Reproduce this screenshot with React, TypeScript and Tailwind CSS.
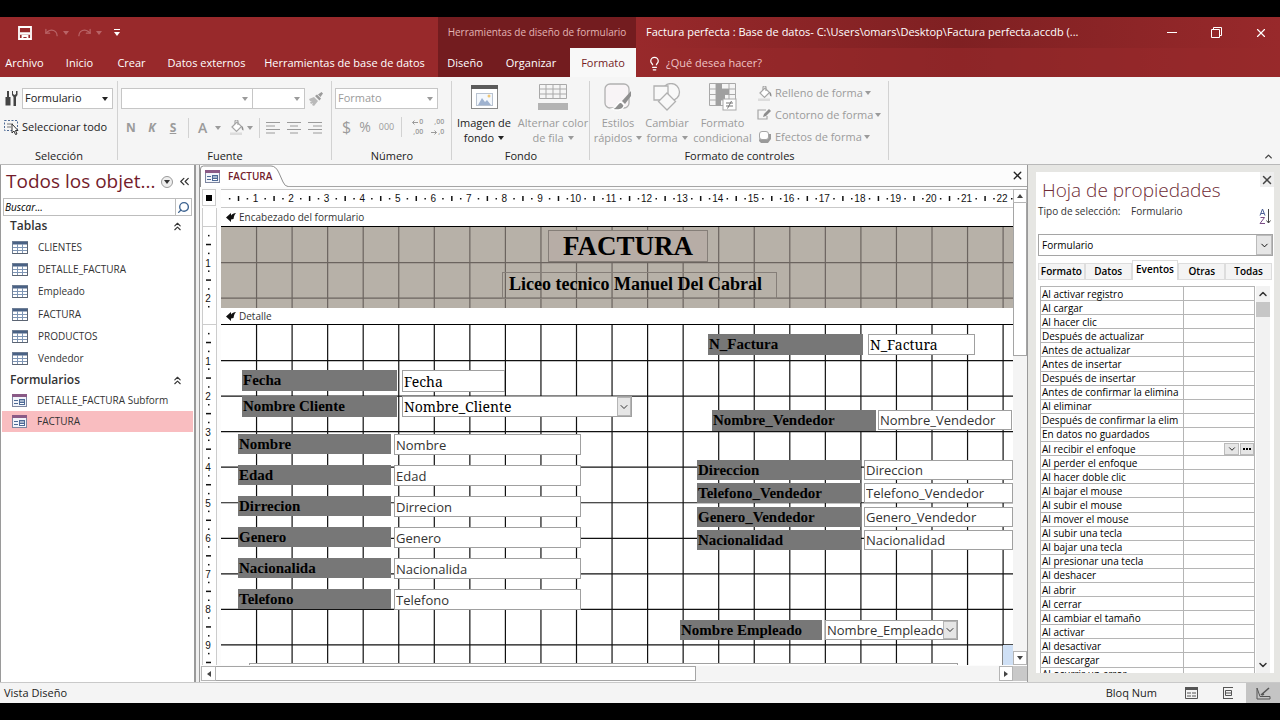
import type { ReactNode } from "react";
import clsx from "clsx";
import {
  ChevronDown,
  ChevronsLeft,
  ChevronsUp,
  ChevronUp,
  Lightbulb,
  Redo,
  Search,
  Undo,
  X,
} from "lucide-react";

const CM = 35.55; // one ruler centimetre on screen

const tables = ["CLIENTES", "DETALLE_FACTURA", "Empleado", "FACTURA", "PRODUCTOS", "Vendedor"];
const forms = ["DETALLE_FACTURA Subform", "FACTURA"];

const menuTabs = [
  { name: "Archivo", width: "w-[49px]" },
  { name: "Inicio", width: "w-[61px]" },
  { name: "Crear", width: "w-[43px]" },
  { name: "Datos externos", width: "w-[107px]" },
  { name: "Herramientas de base de datos", width: "w-[169px]" },
];

const events = [
  "Al activar registro",
  "Al cargar",
  "Al hacer clic",
  "Después de actualizar",
  "Antes de actualizar",
  "Antes de insertar",
  "Después de insertar",
  "Antes de confirmar la elimina",
  "Al eliminar",
  "Después de confirmar la elim",
  "En datos no guardados",
  "Al recibir el enfoque",
  "Al perder el enfoque",
  "Al hacer doble clic",
  "Al bajar el mouse",
  "Al subir el mouse",
  "Al mover el mouse",
  "Al subir una tecla",
  "Al bajar una tecla",
  "Al presionar una tecla",
  "Al deshacer",
  "Al abrir",
  "Al cerrar",
  "Al cambiar el tamaño",
  "Al activar",
  "Al desactivar",
  "Al descargar",
  "Al ocurrir un error",
];

// Controls placed on the detail section: box is [left, top, width, height]
type Field = {
  id: string;
  label: string;
  value: string;
  labelBox: number[];
  box: number[];
  serif?: boolean;
  combo?: boolean;
};

const fields: Field[] = [
  { id: "fecha", label: "Fecha", value: "Fecha", labelBox: [21, 45, 155, 21], box: [181, 45, 103, 22], serif: true },
  { id: "cliente", label: "Nombre Cliente", value: "Nombre_Cliente", labelBox: [21, 71, 155, 21], box: [181, 71, 230, 21], serif: true, combo: true },
  { id: "nombre", label: "Nombre", value: "Nombre", labelBox: [17, 109, 153, 20], box: [173, 109, 187, 21] },
  { id: "edad", label: "Edad", value: "Edad", labelBox: [17, 140, 153, 20], box: [173, 140, 187, 21] },
  { id: "dirrecion", label: "Dirrecion", value: "Dirrecion", labelBox: [17, 171, 153, 20], box: [173, 171, 187, 21] },
  { id: "genero", label: "Genero", value: "Genero", labelBox: [17, 202, 153, 20], box: [173, 202, 187, 21] },
  { id: "nacionalida", label: "Nacionalida", value: "Nacionalida", labelBox: [17, 233, 153, 20], box: [173, 233, 187, 21] },
  { id: "telefono", label: "Telefono", value: "Telefono", labelBox: [17, 264, 153, 20], box: [173, 264, 187, 21] },
  { id: "nfactura", label: "N_Factura", value: "N_Factura", labelBox: [487, 9, 155, 21], box: [647, 9, 107, 21], serif: true },
  { id: "nvendedor", label: "Nombre_Vendedor", value: "Nombre_Vendedor", labelBox: [491, 85, 164, 21], box: [657, 85, 134, 20] },
  { id: "direccion", label: "Direccion", value: "Direccion", labelBox: [476, 135, 164, 20], box: [643, 135, 149, 20] },
  { id: "tvendedor", label: "Telefono_Vendedor", value: "Telefono_Vendedor", labelBox: [476, 158, 164, 20], box: [643, 158, 149, 20] },
  { id: "gvendedor", label: "Genero_Vendedor", value: "Genero_Vendedor", labelBox: [476, 182, 164, 20], box: [643, 182, 149, 20] },
  { id: "nacionalidad", label: "Nacionalidad", value: "Nacionalidad", labelBox: [476, 205, 164, 20], box: [643, 205, 149, 20] },
  { id: "empleado", label: "Nombre Empleado", value: "Nombre_Empleado", labelBox: [459, 295, 142, 20], box: [604, 295, 133, 20], combo: true },
];

const place = ([left, top, width, height]: number[]) => ({ left, top, width, height });

/* ---------- small glyphs ---------- */

function Caret({ className = "" }: { className?: string }) {
  return (
    <svg viewBox="0 0 6 4" className={clsx("h-1 w-[6px] shrink-0 fill-current", className)}>
      <path d="M0 0h6L3 4z" />
    </svg>
  );
}

function TableIcon() {
  return (
    <svg viewBox="0 0 16 13" className="h-[13px] w-4 shrink-0">
      <rect x="0.5" y="0.5" width="15" height="12" fill="#fff" stroke="#6f7f96" />
      <rect x="1" y="1" width="14" height="2.500" fill="#4a6285" />
      <path d="M1 6.500h14M1 9.500h14M5.500 3v9M10.500 3v9" stroke="#7f96b5" />
      <path d="M0.500 12.500h15V1" stroke="#5b6472" fill="none" />
    </svg>
  );
}

function FormIcon() {
  return (
    <svg viewBox="0 0 15 13" className="h-[13px] w-[15px] shrink-0">
      <rect x="0.5" y="0.5" width="14" height="12" fill="#f2f4fa" stroke="#7d86a0" />
      <rect x="0" y="0" width="15" height="3" fill="#8a5a86" />
      <path d="M2 6.500h4M2 9.500h4" stroke="#4d6a96" />
      <rect x="7" y="5" width="6" height="6" fill="#4d6a96" />
      <path d="M8 7h4M8 9.500h4" stroke="#fff" />
    </svg>
  );
}

function BucketIcon() {
  return (
    <svg viewBox="0 0 16 15" className="h-[15px] w-4 shrink-0" fill="none" stroke="#a6a6a6" strokeWidth="1.200">
      <path d="M3 7l5-5 4.500 4.500-5 5z" fill="#fff" />
      <path d="M6 4V1.500a1.500 1.500 0 013 0V5" />
      <path d="M12 6c2 0 2.500 2 2.500 4.500-1 0-2-1-2-4z" fill="#8c8c8c" stroke="none" />
      <rect x="1" y="12.500" width="12" height="2.500" fill="#dcdcdc" stroke="none" />
    </svg>
  );
}

function AlignIcon({ d }: { d: string }) {
  return (
    <svg viewBox="0 0 14 12" className="h-3 w-[14px]" stroke="#9b9b9b">
      <path d={d} />
    </svg>
  );
}

function DecimalIcon({ top, bottom, arrow }: { top: string; bottom: string; arrow: "left" | "right" }) {
  const arrowPath = arrow === "left" ? "M6 2.500H.5M2.500.5l-2 2 2 2" : "M0 2.500h5.500M3.500.5l2 2-2 2";
  const icon = (
    <svg viewBox="0 0 6 5" className="h-[5px] w-[6px]" fill="none" stroke="currentColor">
      <path d={arrowPath} />
    </svg>
  );
  return (
    <span className="flex w-[15px] flex-col items-end text-[7px] leading-[10px] font-semibold">
      <span className="flex items-center gap-px">
        {arrow === "left" && icon}
        {top}
      </span>
      <span className="flex items-center gap-px">
        {arrow === "right" && icon}
        {bottom}
      </span>
    </span>
  );
}

/* ---------- title bar and ribbon tabs ---------- */

function Header() {
  return (
    <header className="flex h-[60px] shrink-0 bg-[#98292b] text-[11px] font-medium text-white">
      <div className="flex w-[438px] shrink-0 flex-col">
        <div className="flex h-[31px] items-center pl-[18px]">
          <button aria-label="Guardar">
            <svg viewBox="0 0 14 14" className="h-[14px] w-[14px]" fill="none" stroke="#fff" strokeWidth="1.800">
              <path d="M1 1h12v12H1z" />
              <path d="M2 7.500h10" strokeWidth="2.500" />
              <path d="M4.500 13v-3h5v3" />
            </svg>
          </button>
          <button aria-label="Deshacer" className="ml-3 flex items-center gap-1 text-[#b96467]">
            <Undo size={15} />
            <Caret />
          </button>
          <button aria-label="Rehacer" className="ml-2 flex items-center gap-1 text-[#b96467]">
            <Redo size={15} />
            <Caret />
          </button>
          <button aria-label="Personalizar" className="ml-3 flex flex-col items-center gap-[2px]">
            <span className="h-px w-[6px] bg-white" />
            <Caret />
          </button>
        </div>
        <nav className="flex flex-1 items-center pt-px">
          {menuTabs.map((tab) => (
            <button key={tab.name} className={clsx("shrink-0 text-center whitespace-nowrap", tab.width)}>
              {tab.name}
            </button>
          ))}
        </nav>
      </div>

      <div className="flex w-[198px] shrink-0 flex-col bg-[#731c1f]">
        <div className="flex h-[31px] items-center justify-center text-[10px] text-[#e3b4b5]">
          <span className="whitespace-nowrap">Herramientas de diseño de formulario</span>
        </div>
        <nav className="flex flex-1">
          <button className="w-[54px] pt-px">Diseño</button>
          <button className="w-[78px] pt-px">Organizar</button>
          <button className="flex-1 bg-[#f8f8f8] pt-px text-[#731c1f]">Formato</button>
        </nav>
      </div>

      <div className="flex min-w-0 flex-1 flex-col bg-linear-to-r from-[#98292b] via-[#7f2022] to-[#98292b]">
        <div className="flex h-[31px] items-center pl-[10px]">
          <h1 className="flex-1 truncate">
            Factura perfecta : Base de datos- C:\Users\omars\Desktop\Factura perfecta.accdb (...
          </h1>
          <div className="flex shrink-0 gap-8 pr-3">
            <button aria-label="Minimizar" className="flex w-3 items-center">
              <span className="h-px w-[10px] bg-white" />
            </button>
            <button aria-label="Restaurar">
              <svg viewBox="0 0 11 11" className="h-[11px] w-[11px]" fill="none" stroke="#fff">
                <path d="M0.500 2.500h8v8h-8zM2.500 2.500v-2h8v8h-2" />
              </svg>
            </button>
            <button aria-label="Cerrar">
              <X size={14} strokeWidth={2} />
            </button>
          </div>
        </div>
        <div className="flex flex-1 items-center gap-1 bg-[#98292b]/60 pt-px pl-[11px] font-normal text-[#efc4c5]">
          <Lightbulb size={15} className="text-white" />
          <button>¿Qué desea hacer?</button>
        </div>
      </div>
    </header>
  );
}

/* ---------- ribbon ---------- */

function Group({ title, className, children }: { title: string; className: string; children: ReactNode }) {
  return (
    <section className={clsx("relative flex shrink-0 flex-col pt-1", className)}>
      <div className="flex-1">{children}</div>
      <h2 className="text-center text-[11px] leading-4 font-medium text-[#222]">{title}</h2>
      <span className="absolute top-1 right-0 bottom-1 w-px bg-[#d2d2d2]" />
    </section>
  );
}

function Combo({ label, value, className }: { label: string; value: string; className: string }) {
  return (
    <div className={clsx("relative h-[21px] border border-[#c6c6c6] bg-white", className)}>
      <select aria-label={label} className="h-full w-full appearance-none px-[2px]">
        <option>{value}</option>
      </select>
      <Caret className="pointer-events-none absolute top-2 right-1" />
    </div>
  );
}

function BigButton({ icon, lines, className, caret = true }: { icon: ReactNode; lines: string[]; className: string; caret?: boolean }) {
  return (
    <button className={clsx("flex flex-col items-center leading-[15px]", className)}>
      <span className="mb-1 flex h-7 items-center">{icon}</span>
      <span className="whitespace-nowrap">{lines[0]}</span>
      <span className="flex items-center gap-1 whitespace-nowrap">
        {lines[1]}
        {caret && <Caret />}
      </span>
    </button>
  );
}

function Separator() {
  return <span className="h-5 w-px bg-[#d2d2d2]" />;
}

function Ribbon() {
  return (
    <div className="flex h-[88px] shrink-0 border-b border-[#b9b9b9] bg-[#f5f5f5] text-[11px] text-[#9b9b9b]">
      <Group title="Selección" className="w-[118px] text-[#222]">
        <div className="flex items-center gap-1 pt-[7px] pl-[5px]">
          <svg viewBox="0 0 13 15" className="h-[15px] w-[13px]" fill="#444">
            <path d="M2 0h2v6h1.500v8.500h-5V6H2zM7 0l1 0v3l1.500 1L11 3V0h1.500v4L11 6v9H8.500V6L7 4z" />
          </svg>
          <Combo label="Objeto" value="Formulario" className="w-[91px]" />
        </div>
        <button className="mt-[10px] flex items-center gap-[3px] pl-1 whitespace-nowrap">
          <svg viewBox="0 0 15 15" className="h-[15px] w-[15px]" fill="none">
            <path d="M0.500 0.500h13v10h-13z" stroke="#4d6a96" strokeDasharray="2 1.500" />
            <path d="M3 4h6M3 7h4" stroke="#777" />
            <path d="M8 4v9l2-2 1.500 3.500 1.500-.5-1.500-3.500H14z" fill="#fff" stroke="#333" />
          </svg>
          Seleccionar todo
        </button>
      </Group>

      <Group title="Fuente" className="w-[214px]">
        <div className="flex items-center pt-[7px] pl-[3px]">
          <Combo label="Fuente" value="" className="w-[132px]" />
          <Combo label="Tamaño de fuente" value="" className="w-[52px] border-l-0" />
          <svg viewBox="0 0 14 14" className="ml-1 h-[14px] w-[14px]" fill="#9b9b9b">
            <path d="M0 7l5-2 4 4-4 5-2-1 1-2-2 1-1-2 2-1-2 0z" fill="#b9b9b9" />
            <path d="M6 4l2-1.500 4 4L10.500 8.500zM9 2.500L12.500 0 14 1.500 11.500 5z" />
          </svg>
        </div>
        <div className="mt-2 flex items-center pl-2 text-[12px] font-bold">
          <button className="w-[10px]">N</button>
          <button className="ml-[11px] w-[10px] italic">K</button>
          <button className="ml-[11px] w-[10px] underline">S</button>
          <span className="mr-[9px] ml-[10px] flex">
            <Separator />
          </span>
          <button className="flex items-center gap-2 text-[14px] font-semibold">
            A
            <Caret />
          </button>
          <button className="ml-2 flex items-center gap-[2px]" aria-label="Relleno">
            <BucketIcon />
            <Caret />
          </button>
          <span className="mx-[6px] flex">
            <Separator />
          </span>
          <span className="flex gap-[7px]">
            <button aria-label="Izquierda"><AlignIcon d="M0 .5h14M0 4h9M0 7.500h14M0 11h9" /></button>
            <button aria-label="Centrar"><AlignIcon d="M0 .5h14M3 4h8M0 7.500h14M3 11h8" /></button>
            <button aria-label="Derecha"><AlignIcon d="M0 .5h14M5 4h9M0 7.500h14M5 11h9" /></button>
          </span>
        </div>
      </Group>

      <Group title="Número" className="w-[120px]">
        <div className="pt-[7px] pl-[3px]">
          <Combo label="Formato" value="Formato" className="w-[103px]" />
        </div>
        <div className="mt-2 flex items-center pl-[10px]">
          <button className="text-[16px] leading-5">$</button>
          <button className="ml-2 text-[14px] leading-5">%</button>
          <button className="ml-2 text-[9px]">000</button>
          <span className="mr-[6px] ml-[7px] flex">
            <Separator />
          </span>
          <button className="mr-[6px]"><DecimalIcon top="0" bottom=",00" arrow="left" /></button>
          <button><DecimalIcon top=",00" bottom=",0" arrow="right" /></button>
        </div>
      </Group>

      <Group title="Fondo" className="w-[138px]">
        <div className="flex pt-[2px]">
          <BigButton
            className="w-16 font-medium text-[#222]"
            lines={["Imagen de", "fondo"]}
            icon={
              <svg viewBox="0 0 27 24" className="h-6 w-[27px]">
                <rect x="0.500" y="0.500" width="26" height="23" fill="#fff" stroke="#8a8a8a" />
                <rect width="27" height="4" fill="#5b5b5b" />
                <rect x="5.500" y="8.500" width="16" height="12" fill="#f4f8fd" stroke="#b9c3d1" />
                <path d="M7 20l4-7 3 4 2-2 4 5z" fill="#9fb2cf" />
                <circle cx="18" cy="11" r="1.500" fill="#f0c674" />
              </svg>
            }
          />
          <BigButton
            className="flex-1"
            lines={["Alternar color", "de fila"]}
            icon={
              <svg viewBox="0 0 30 26" className="h-[26px] w-[30px]" fill="none" stroke="#a9a9a9">
                <path d="M1.500 0.500h27v14h-27zM1.500 5h27M1.500 10h27M8 .5v14M15 .5v14M22 .5v14" />
                <rect y="19" width="30" height="7" fill="#b3b3b3" stroke="none" />
              </svg>
            }
          />
        </div>
      </Group>

      <Group title="Formato de controles" className="w-[299px]">
        <div className="flex h-16 pt-[2px]">
          <BigButton
            className="w-14 shrink-0"
            lines={["Estilos", "rápidos"]}
            icon={
              <svg viewBox="0 0 28 28" className="h-7 w-7" fill="none" stroke="#b0b0b0" strokeWidth="1.300">
                <rect x="1" y="1" width="24" height="24" rx="5" fill="#f8f4f6" />
                <path d="M27 8l-9 10 3 3 6-8z" fill="#8f8f8f" stroke="none" />
                <path d="M17 19c-4 0-4 6-9 7 5 2 12 1 12-4z" fill="#8f8f8f" stroke="#fff" />
              </svg>
            }
          />
          <BigButton
            className="w-[42px] shrink-0"
            lines={["Cambiar", "forma"]}
            icon={
              <svg viewBox="0 0 28 28" className="h-7 w-7" fill="#f8f8f8" stroke="#b0b0b0" strokeWidth="1.300">
                <circle cx="18" cy="9" r="8.500" />
                <path d="M1 3h14v14H1z" />
                <path d="M14 10l8.500 8.500L14 27l-8.500-8.500z" />
              </svg>
            }
          />
          <BigButton
            className="ml-1 w-[61px] shrink-0"
            lines={["Formato", "condicional"]}
            caret={false}
            icon={
              <svg viewBox="0 0 28 28" className="h-7 w-7" fill="none" stroke="#a9a9a9">
                <path d="M.5.500h26v22H.5zM.5 6h26M.5 11.500h26M.5 17h26M7 .5v22M20 .5v22" />
                <path d="M7 .5h6V6H7zM7 6h13v5.500H7zM7 11.500h9V17H7zM7 17h5v5.500H7z" fill="#a0a0a0" stroke="none" />
                <rect x="14" y="16" width="13" height="11" fill="#fff" />
                <path d="M17 20h7M17 23h7M22.500 18l-4 7.500" stroke="#777" />
              </svg>
            }
          />
          <div className="ml-1 flex flex-col gap-[2px]">
            <button className="flex h-5 shrink-0 items-center gap-[2px] whitespace-nowrap">
              <BucketIcon />
              Relleno de forma
              <Caret />
            </button>
            <button className="flex h-5 shrink-0 items-center gap-[2px] whitespace-nowrap">
              <svg viewBox="0 0 16 14" className="h-[14px] w-4" fill="none" stroke="#a6a6a6" strokeWidth="1.200">
                <path d="M9 2H1v9h9V8" />
                <path d="M6 9l1-3 5-5 2 2-5 5z" fill="#8c8c8c" stroke="none" />
              </svg>
              Contorno de forma
              <Caret />
            </button>
            <button className="flex h-5 shrink-0 items-center gap-[2px] whitespace-nowrap">
              <svg viewBox="0 0 16 14" className="h-[14px] w-4">
                <path d="M3 4h11v5l-3 4H4l-2-2z" fill="#9a9a9a" />
                <rect x="2.500" y="1.500" width="9" height="8" rx="2.500" fill="#fff" stroke="#a6a6a6" />
              </svg>
              Efectos de forma
              <Caret />
            </button>
          </div>
        </div>
      </Group>
      <button aria-label="Contraer la cinta" className="ml-auto self-end pr-[6px] pb-[2px] text-[#444]">
        <ChevronUp size={11} strokeWidth={3} />
      </button>
    </div>
  );
}

/* ---------- navigation pane ---------- */

function NavHeading({ title }: { title: string }) {
  return (
    <div className="flex h-5 items-center justify-between pr-[10px] pl-[9px]">
      <h3 className="text-[12px] font-semibold text-[#333]">{title}</h3>
      <ChevronsUp size={13} className="text-[#333]" />
    </div>
  );
}

function NavigationPane() {
  return (
    <aside className="w-[196px] shrink-0 border-r-2 border-l border-[#9a9a9a] bg-white">
      <div className="flex h-[33px] items-center pl-[5px]">
        <h2 className="flex-1 text-[19px] whitespace-nowrap text-[#731c2b]">Todos los objet...</h2>
        <button aria-label="Filtrar" className="flex h-3 w-3 shrink-0 items-center justify-center rounded-full border border-[#999] bg-[#eee] text-[#333]">
          <Caret />
        </button>
        <button aria-label="Contraer panel" className="mr-[2px] ml-1">
          <ChevronsLeft size={15} className="text-[#333]" />
        </button>
      </div>
      <div className="mx-[2px] flex h-[18px] items-center border border-[#bdbdbd]">
        <input aria-label="Buscar" placeholder="Buscar..." className="h-4 w-0 flex-1 px-px text-[10px] italic placeholder:text-black" />
        <button aria-label="Buscar objetos" className="flex h-4 w-4 items-center justify-center border-l border-[#bdbdbd]">
          <Search size={13} strokeWidth={2.5} className="-scale-x-100 text-[#3d6390]" />
        </button>
      </div>
      <NavHeading title="Tablas" />
      <ul className="grid h-[134px] auto-rows-fr text-[10px] text-[#333]">
        {tables.map((name) => (
          <li key={name} className="flex items-center gap-[10px] pl-[11px]">
            <TableIcon />
            <a href="#tabla">{name}</a>
          </li>
        ))}
      </ul>
      <NavHeading title="Formularios" />
      <ul className="grid h-[42px] auto-rows-fr text-[10px] text-[#333]">
        {forms.map((name) => (
          <li
            key={name}
            className={clsx("mx-px flex items-center gap-[10px] pl-[10px]", name === "FACTURA" && "bg-[#f9bdc0]")}
          >
            <FormIcon />
            <a href="#formulario">{name}</a>
          </li>
        ))}
      </ul>
    </aside>
  );
}

/* ---------- form designer ---------- */

function HorizontalRuler() {
  const marks = Array.from({ length: 44 }, (_, i) => i + 1);
  return (
    <svg className="h-full w-full font-['Liberation_Sans',sans-serif]" fontSize="10" textAnchor="middle" fill="#111">
      {marks.map((i) => (
        <g key={i}>
          {i <= 22 && <text x={i * CM - 1} y="12">{i}</text>}
          <rect x={(i - 1) * CM + CM / 4 - 1} y="8" width="1.500" height="1.500" />
          <rect x={(i - 1) * CM + CM / 2 - 1} y="6" width="1.500" height="5" />
          <rect x={(i - 1) * CM + (CM * 3) / 4 - 1} y="8" width="1.500" height="1.500" />
        </g>
      ))}
    </svg>
  );
}

function VerticalRuler({ count }: { count: number }) {
  const marks = Array.from({ length: count + 1 }, (_, i) => i);
  return (
    <svg className="h-full w-full font-['Liberation_Sans',sans-serif]" fontSize="10" textAnchor="middle" fill="#111">
      {marks.map((i) => (
        <g key={i}>
          {i > 0 && <text x="5" y={i * CM + 4}>{i}</text>}
          <rect x="5" y={i * CM + CM / 4 - 1} width="1.500" height="1.500" />
          <rect x="3" y={i * CM + CM / 2 - 1} width="5" height="1.500" />
          <rect x="5" y={i * CM + (CM * 3) / 4 - 1} width="1.500" height="1.500" />
        </g>
      ))}
    </svg>
  );
}

function GridLines({ color }: { color: string }) {
  const columns = Array.from({ length: 60 }, (_, i) => (i + 1) * CM);
  const rows = Array.from({ length: 30 }, (_, i) => (i + 1) * CM);
  return (
    <svg className="absolute inset-0 h-full w-full" stroke={color} strokeWidth="1.200">
      {columns.map((x) => (
        <line key={x} x1={x} x2={x} y1="0" y2="2000" />
      ))}
      {rows.map((y) => (
        <line key={y} x1="0" x2="3000" y1={y} y2={y} />
      ))}
    </svg>
  );
}

function SectionBar({ title, className }: { title: string; className: string }) {
  return (
    <div
      className={clsx(
        "flex shrink-0 items-center gap-[3px] border-b border-black bg-white pl-[5px] text-[10px] font-medium text-[#333]",
        className,
      )}
    >
      <svg viewBox="0 0 10 9" className="h-[9px] w-[10px]" fill="#111">
        <path d="M0 4.500L5 0v2.500c1-1.500 3-2.500 5-2.500-2 2-2 4-2.500 6L5 6.500V9z" />
      </svg>
      <h3>{title}</h3>
    </div>
  );
}

function FormField({ field }: { field: Field }) {
  const text = field.serif ? "font-['Noto_Serif','Liberation_Serif',serif] text-[14px] text-black" : "text-[13px] text-[#333]";
  return (
    <>
      <label
        htmlFor={field.id}
        style={place(field.labelBox)}
        className="absolute flex items-center bg-[#777] pl-px font-['Liberation_Serif',serif] text-[15px] font-bold whitespace-nowrap text-black"
      >
        {field.label}
      </label>
      {field.combo ? (
        <div style={place(field.box)} className="absolute flex border border-[#a0a0a0] bg-white">
          <select id={field.id} className={clsx("min-w-0 flex-1 appearance-none pl-px leading-4", text)}>
            <option>{field.value}</option>
          </select>
          <span className="pointer-events-none flex w-[14px] shrink-0 items-center justify-center border border-[#b5b5b5] bg-[#e6e6e6]">
            <ChevronDown size={12} className="text-[#333]" />
          </span>
        </div>
      ) : (
        <input
          id={field.id}
          defaultValue={field.value}
          style={place(field.box)}
          className={clsx("absolute border border-[#a0a0a0] bg-white pl-px", text)}
        />
      )}
    </>
  );
}

function Designer() {
  return (
    <main className="flex min-w-0 flex-1 flex-col border-x border-[#9a9a9a] bg-[#fcfcfc]">
      <div className="flex h-[22px] shrink-0">
        <div className="relative h-[22px] w-[88px] shrink-0">
          <svg viewBox="0 0 88 22" className="absolute inset-0 h-[22px] w-[88px]" fill="#fff" stroke="#8f8f8f">
            <path d="M0.500 22V4q0-3 3-3H71q5 0 8 7l4 9q2 4.500 5 4.500" />
          </svg>
          <button className="relative flex h-[22px] items-center gap-2 pl-[5px] text-[10px] font-semibold text-[#731c2b]">
            <FormIcon />
            FACTURA
          </button>
        </div>
        <div className="flex flex-1 items-center justify-end border-b border-[#a5a5a5] pr-[3px]">
          <button aria-label="Cerrar formulario">
            <X size={13} strokeWidth={2.5} className="text-[#222]" />
          </button>
        </div>
      </div>

      <div className="flex min-h-0 flex-1 pt-[2px]">
        <div className="flex min-w-0 flex-1 flex-col">
          {/* Top ruler */}
          <div className="flex h-[19px] shrink-0 pl-[2px]">
            <div className="mr-[5px] flex h-[17px] w-[14px] shrink-0 items-center justify-center border border-[#ccc] bg-white">
              <span className="h-[6px] w-[6px] bg-black" />
            </div>
            <div className="min-w-0 flex-1 border-t border-b border-[#c9c9c9] bg-white">
              <HorizontalRuler />
            </div>
          </div>
          <div className="flex min-h-0 flex-1">
            {/* Left ruler */}
            <div className="mr-1 ml-[2px] flex w-[15px] shrink-0 flex-col border-x border-[#ccc] bg-white">
              <div className="h-[19px] shrink-0 border-b border-[#ccc]" />
              <div className="h-[81px] shrink-0 overflow-hidden">
                <VerticalRuler count={2} />
              </div>
              <div className="h-[17px] shrink-0 border-b border-[#ccc]" />
              <div className="min-h-0 flex-1 overflow-hidden">
                <VerticalRuler count={9} />
              </div>
            </div>
            <div className="flex min-w-0 flex-1 flex-col">
              <SectionBar title="Encabezado del formulario" className="h-[19px] pt-px" />
              <div className="relative h-[81px] shrink-0 overflow-hidden bg-[#b7b1a8] font-['Liberation_Serif',serif] font-bold text-black">
                <GridLines color="#6b645f" />
                <div className="absolute top-[3px] left-[327px] h-8 w-[160px] border border-[#857e78] bg-[#b7ada6] text-center text-[27px] leading-[30px]">
                  FACTURA
                </div>
                <div className="absolute top-[45px] left-[281px] h-[27px] w-[275px] border border-[#857e78] pl-[6px] text-[18px] leading-[23px] whitespace-nowrap">
                  Liceo tecnico Manuel Del Cabral
                </div>
              </div>
              <SectionBar title="Detalle" className="h-[17px]" />
              <div className="relative min-h-0 flex-1 overflow-hidden bg-white">
                <GridLines color="#111" />
                {fields.map((field) => (
                  <FormField key={field.id} field={field} />
                ))}
                <div className="absolute top-[338px] left-7 h-20 w-[709px] border border-[#a0a0a0] bg-white" />
                <div className="absolute right-0 bottom-0 h-5 w-[10px] bg-[#cfe0f5]" />
              </div>
            </div>
          </div>
        </div>
        {/* Vertical scroll bar */}
        <div className="flex w-[14px] shrink-0 flex-col bg-[#f4f4f4] text-[#444]">
          <button aria-label="Subir" className="flex h-[14px] items-center justify-center border border-[#b5b5b5] bg-white">
            <Caret className="rotate-180" />
          </button>
          <div className="h-[153px] border border-t-0 border-[#a5a5a5] bg-white" />
          <button aria-label="Bajar" className="mt-auto flex h-[14px] items-center justify-center border border-[#b5b5b5] bg-white">
            <Caret />
          </button>
        </div>
      </div>

      {/* Horizontal scroll bar */}
      <div className="mt-px mb-px flex h-[15px] shrink-0 bg-[#f4f4f4] pl-px text-[#444]">
        <button aria-label="Izquierda" className="flex w-[15px] items-center justify-center border border-[#b5b5b5] bg-white">
          <Caret className="rotate-90" />
        </button>
        <div className="w-[480px] border border-l-0 border-[#a5a5a5] bg-white" />
        <button aria-label="Derecha" className="ml-auto flex w-[14px] items-center justify-center border border-[#b5b5b5] bg-white">
          <Caret className="-rotate-90" />
        </button>
        <span className="w-[14px] bg-[#c9c9c9]" />
      </div>
    </main>
  );
}

/* ---------- property sheet ---------- */

function PropertySheet() {
  return (
    <aside className="flex w-[252px] shrink-0 flex-col bg-[#e6e6e3] pt-[7px] pr-[6px] pb-[9px] pl-2 text-[10px] text-black">
      <div className="flex min-h-0 flex-1 flex-col bg-white">
        <div className="flex h-8 items-start justify-between pl-[6px]">
          <h2 className="text-[19px] leading-[36px] font-light whitespace-nowrap text-[#6e2a35]">Hoja de propiedades</h2>
          <button aria-label="Cerrar hoja" className="flex h-[15px] w-[14px] items-center justify-center bg-[#eee]">
            <X size={14} strokeWidth={2.5} className="text-[#444]" />
          </button>
        </div>
        <div className="flex h-[30px] items-start justify-between pr-[3px] pl-[2px] font-medium text-[#333]">
          <p className="leading-[14px]">
            Tipo de selección: <span className="ml-2">Formulario</span>
          </p>
          <button aria-label="Ordenar" className="mt-1">
            <svg viewBox="0 0 12 16" className="h-4 w-3" fill="none">
              <path d="M1 7.500L3.500 1 6 7.500M2 5.500h3" stroke="#4d5f96" />
              <path d="M1.500 9.500h4l-4.500 6h5" stroke="#7a4d86" />
              <path d="M9.500 1v14M7.500 12.500l2 2.500 2-2.500" stroke="#444" />
            </svg>
          </button>
        </div>
        <div className="mr-px ml-[2px] flex h-[22px] border border-[#a5a5a5]">
          <select aria-label="Objeto seleccionado" className="flex-1 appearance-none pl-[3px] font-medium">
            <option>Formulario</option>
          </select>
          <span className="pointer-events-none flex w-4 items-center justify-center border border-[#bbb] bg-[#e6e6e6]">
            <ChevronDown size={11} />
          </span>
        </div>
        <div role="tablist" className="mt-1 flex h-5 items-end pr-[2px] pl-[2px] font-semibold">
          {["Formato", "Datos", "Eventos", "Otras", "Todas"].map((tab) => (
            <button
              key={tab}
              role="tab"
              aria-selected={tab === "Eventos"}
              className={clsx(
                "flex-1 border border-[#ddd]",
                tab === "Eventos" ? "h-5 border-b-0 bg-white pb-[2px]" : "h-[17px] bg-[#f4f4f4]",
              )}
            >
              {tab}
            </button>
          ))}
        </div>
        <div className="mt-[6px] flex min-h-0 flex-1 pr-1 pl-1">
          <div className="min-h-0 flex-1 overflow-hidden">
            <table className="h-[396px] w-full table-fixed border-collapse font-medium">
              <tbody>
                {events.map((name, i) => (
                  <tr key={name}>
                    <th scope="row" className="w-[143px] border border-[#b5b5b5] p-0 pl-px text-left leading-3 font-medium whitespace-nowrap">
                      {name}
                    </th>
                    <td className="border border-[#b5b5b5] p-0">
                      {i === 11 && (
                        <div className="flex h-3 justify-end gap-px">
                          <button aria-label="Abrir lista" className="flex w-[15px] items-center justify-center border border-[#bbb] bg-[#e6e6e6]">
                            <ChevronDown size={10} />
                          </button>
                          <button aria-label="Generar" className="flex w-[14px] items-center justify-center gap-px border border-[#bbb] bg-[#e6e6e6]">
                            <span className="h-[2px] w-[2px] bg-black" />
                            <span className="h-[2px] w-[2px] bg-black" />
                            <span className="h-[2px] w-[2px] bg-black" />
                          </button>
                        </div>
                      )}
                    </td>
                  </tr>
                ))}
              </tbody>
            </table>
          </div>
          <div className="ml-px flex w-[14px] flex-col items-center bg-[#f2f2f2]">
            <button aria-label="Desplazar arriba" className="flex h-4 items-center">
              <ChevronUp size={12} strokeWidth={3} className="text-[#333]" />
            </button>
            <span className="h-[15px] w-full bg-[#c6c6c6]" />
            <button aria-label="Desplazar abajo" className="mt-auto flex h-4 items-center">
              <ChevronDown size={12} strokeWidth={3} className="text-[#333]" />
            </button>
          </div>
        </div>
      </div>
    </aside>
  );
}

/* ---------- status bar ---------- */

function StatusBar() {
  return (
    <footer className="flex h-[21px] shrink-0 items-center border-t border-[#c9c9c9] bg-[#f4f4f4] pl-1 text-[11px] text-[#222]">
      <span className="flex-1">Vista Diseño</span>
      <span className="mr-7 font-medium">Bloq Num</span>
      <button aria-label="Vista Formulario" className="mr-6">
        <svg viewBox="0 0 13 12" className="h-3 w-[13px]" fill="none" stroke="#555">
          <path d="M.5.500h12v11H.5z" />
          <path d="M0 1.500h13" strokeWidth="3" />
          <path d="M2 6h4M2 9h4M7 6h4M7 9h4" />
        </svg>
      </button>
      <button aria-label="Vista Presentación" className="mr-3">
        <svg viewBox="0 0 12 12" className="h-3 w-3" fill="none" stroke="#555">
          <path d="M1 .5h10M1 11.500h10M3.500 3.500h6v5h-6zM3.500 6h6M1.500 1v10" />
        </svg>
      </button>
      <button aria-label="Vista Diseño" className="flex h-full w-[34px] items-center justify-center bg-[#c4c4c4]">
        <svg viewBox="0 0 15 13" className="h-[13px] w-[15px]" fill="none" stroke="#555">
          <path d="M1 1v11h13V9.500H4z" />
          <path d="M5 8l8-7M6 8l2-1" strokeWidth="1.600" />
        </svg>
      </button>
    </footer>
  );
}

export default function App() {
  return (
    <div className="flex h-screen flex-col bg-black pt-[17px] pb-[17px] font-['Open_Sans','Noto_Sans',sans-serif]">
      <Header />
      <Ribbon />
      <div className="flex min-h-0 flex-1 bg-[#f0f0f0]">
        <NavigationPane />
        <div className="w-[3px] shrink-0" />
        <Designer />
        <PropertySheet />
      </div>
      <StatusBar />
    </div>
  );
}
